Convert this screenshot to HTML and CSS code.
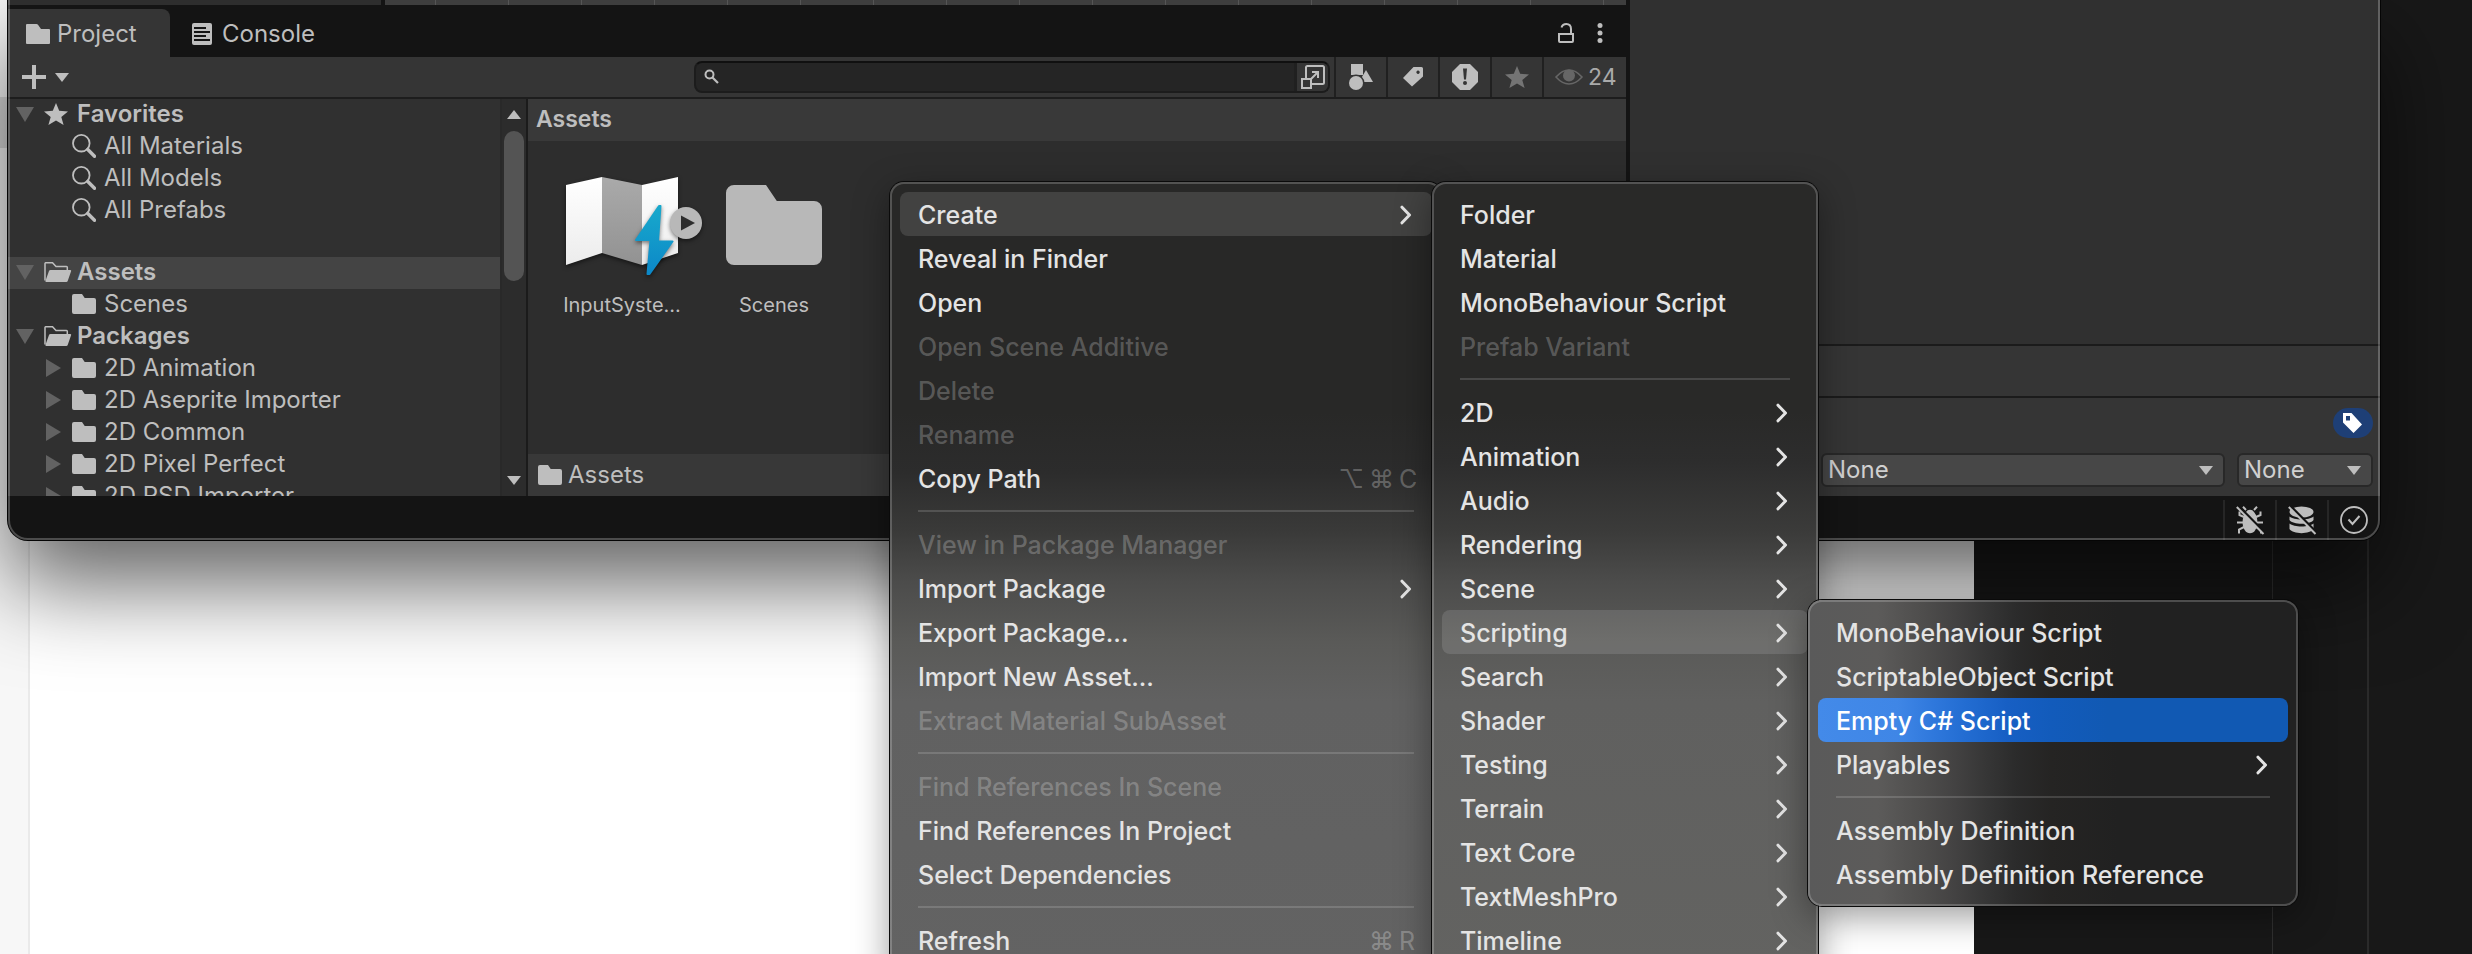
FILE: index.html
```html
<!DOCTYPE html>
<html lang="en">
<head>
<meta charset="utf-8">
<title>Project</title>
<link rel="stylesheet" href="styles.css">
</head>
<body>
<svg class="sprite" aria-hidden="true">
  <symbol id="folder" viewBox="0 0 24 20"><path d="M2 0H10L12.7 4H22a2 2 0 0 1 2 2V18a2 2 0 0 1-2 2H2a2 2 0 0 1-2-2V2a2 2 0 0 1 2-2z"/></symbol>
  <symbol id="folder-open" viewBox="0 0 28 20"><path d="M1 18.500V1.500a.8.8 0 0 1 .8-.8H8.500L12 4.500H22.500a.8.800 0 0 1 .8.8V8" fill="none" stroke="currentColor" stroke-width="1.500"/><path d="M6.500 8H26a1 1 0 0 1 1 1.400L23.700 19a1.500 1.500 0 0 1-1.400 1H2.500a1 1 0 0 1-1-1.300L5 9a1.600 1.600 0 0 1 1.500-1z"/></symbol>
  <symbol id="lens" viewBox="0 0 24 24"><circle cx="9.300" cy="9.200" r="8.300" fill="none" stroke="currentColor" stroke-width="1.800"/><path d="M15.800 15.500L22.500 22.300" stroke="currentColor" stroke-width="3.400" stroke-linecap="round"/></symbol>
  <symbol id="star" viewBox="0 0 24 22"><path d="M12 0L15.200 7.800L24 8.500L17.300 13.900L19.600 22L12 17.600L4.400 22L6.700 13.900L0 8.500L8.800 7.800z"/></symbol>
  <symbol id="tri-down" viewBox="0 0 18 18"><path d="M0 2H18L9 17z"/></symbol>
  <symbol id="tri-right" viewBox="0 0 18 18"><path d="M2 0V18L17 9z"/></symbol>
  <symbol id="caret" viewBox="0 0 14 9"><path d="M0 0H14L7 9z"/></symbol>
  <symbol id="caret-up" viewBox="0 0 14 9"><path d="M0 9H14L7 0z"/></symbol>
  <symbol id="chev" viewBox="0 0 14 20"><path d="M2 2.200L9.500 10L2 17.800" fill="none" stroke="currentColor" stroke-width="3" stroke-linecap="round" stroke-linejoin="round"/></symbol>
</svg>

<div class="desktop">
  <div class="backdrop" aria-hidden="true">
    <div class="rail"><div class="rail-mark"></div></div>
    <div class="page"></div>
    <div class="dark dark-a"></div>
    <div class="dark dark-b"></div>
    <div class="dark dark-c"></div>
  </div>

  <main class="window">
    <div class="split">
      <section class="dock">
        <div class="upper">
          <div class="upper-left"></div>
          <div class="upper-right"></div>
        </div>
        <div class="tabs">
          <button class="tab tab-on"><svg class="ic24x20" viewBox="0 0 24 20"><path d="M1 0H10.500a2 2 0 0 1 1.500.7L15 5H23a1 1 0 0 1 1 1V19a1 1 0 0 1-1 1H1a1 1 0 0 1-1-1V1a1 1 0 0 1 1-1z"/></svg>Project</button>
          <button class="tab"><svg class="ic20x22" viewBox="0 0 20 22"><rect width="20" height="22" rx="2"/><path d="M2 5H14M2 9H18M2 13H14M2 17H18" stroke="#141414" stroke-width="2"/></svg>Console</button>
          <span class="grow"></span>
          <button class="tab-tool" aria-label="Lock"><svg class="ic16x20" viewBox="0 0 16 20"><path d="M1 11H15V18a1 1 0 0 1-1 1H2a1 1 0 0 1-1-1z" fill="none" stroke="currentColor" stroke-width="2"/><path d="M3.500 4.500C4.300 2 6 1 8.300 1C11.500 1 13 3 13 6V10" fill="none" stroke="currentColor" stroke-width="2"/></svg></button>
          <button class="tab-tool" aria-label="More"><svg class="ic16x20" viewBox="0 0 16 20"><circle cx="8" cy="2.500" r="2.500"/><circle cx="8" cy="10" r="2.500"/><circle cx="8" cy="17.500" r="2.500"/></svg></button>
        </div>
        <div class="toolbar">
          <button class="add" aria-label="Add"><svg class="ic24" viewBox="0 0 24 24"><path d="M12 0V24M0 12H24" stroke="currentColor" stroke-width="4"/></svg><svg class="ic14x9"><use href="#caret"/></svg></button>
          <span class="grow"></span>
          <div class="search">
            <svg class="ic16" viewBox="0 0 16 16"><circle cx="5.500" cy="5.500" r="4" fill="none" stroke="currentColor" stroke-width="2"/><path d="M8.500 8.500L14 14" stroke="currentColor" stroke-width="2.200"/></svg>
            <input type="text" aria-label="Search">
            <button class="picker" aria-label="Open in search"><svg class="ic24" viewBox="0 0 24 24"><rect x="5" y="1" width="18" height="18" rx="1.500" fill="none" stroke="currentColor" stroke-width="2"/><rect x="1" y="14" width="9" height="9" fill="#353535" stroke="currentColor" stroke-width="2"/><path d="M9.500 14.500L17 7M11 7H17V13" fill="none" stroke="currentColor" stroke-width="2"/></svg></button>
          </div>
          <button class="tool" aria-label="Filter by type"><svg class="ic24x26" viewBox="0 0 24 26"><path d="M17 6L24 18H10z"/><path d="M2 0H14V11H2z"/><circle cx="7" cy="19" r="7" stroke="#353535" stroke-width="3" paint-order="stroke"/></svg></button>
          <button class="tool" aria-label="Filter by label"><svg class="ic20" viewBox="0 0 20 20"><path fill-rule="evenodd" d="M10.500 0H18.500a1.500 1.500 0 0 1 1.500 1.500V9.500L9 19.500L0 11zM15 3.500a1.700 1.700 0 1 0 .1 0z"/></svg></button>
          <button class="tool" aria-label="Errors"><svg class="ic26" viewBox="0 0 26 26"><path d="M8 0H18L26 8V18L18 26H8L0 18V8z"/><path d="M11 4.500H15L14 15.500H12z" fill="#353535"/><circle cx="13" cy="19" r="2" fill="#353535"/></svg></button>
          <button class="tool dim" aria-label="Favorite"><svg class="ic24x22"><use href="#star"/></svg></button>
          <button class="tool tool-wide"><svg class="ic28x16 eye" viewBox="0 0 28 16"><path d="M1 8C6 2.500 9 1 14 1S22 2.500 27 8C22 13.500 19 15 14 15S6 13.500 1 8z" fill="none" stroke="currentColor" stroke-width="1.600"/><circle cx="14" cy="6.500" r="6"/></svg>24</button>
        </div>
        <div class="dock-body">
          <div class="tree">
            <div class="row bold"><svg class="twist"><use href="#tri-down"/></svg><svg class="ic24x22"><use href="#star"/></svg>Favorites</div>
            <div class="row child"><svg class="twist"></svg><svg class="ic24"><use href="#lens"/></svg>All Materials</div>
            <div class="row child"><svg class="twist"></svg><svg class="ic24"><use href="#lens"/></svg>All Models</div>
            <div class="row child"><svg class="twist"></svg><svg class="ic24"><use href="#lens"/></svg>All Prefabs</div>
            <div class="tree-gap"></div>
            <div class="row bold on"><svg class="twist"><use href="#tri-down"/></svg><svg class="ic28x20"><use href="#folder-open"/></svg>Assets</div>
            <div class="row child"><svg class="twist"></svg><svg class="ic24x20"><use href="#folder"/></svg>Scenes</div>
            <div class="row bold"><svg class="twist"><use href="#tri-down"/></svg><svg class="ic28x20"><use href="#folder-open"/></svg>Packages</div>
            <div class="row child"><svg class="twist"><use href="#tri-right"/></svg><svg class="ic24x20"><use href="#folder"/></svg>2D Animation</div>
            <div class="row child"><svg class="twist"><use href="#tri-right"/></svg><svg class="ic24x20"><use href="#folder"/></svg>2D Aseprite Importer</div>
            <div class="row child"><svg class="twist"><use href="#tri-right"/></svg><svg class="ic24x20"><use href="#folder"/></svg>2D Common</div>
            <div class="row child"><svg class="twist"><use href="#tri-right"/></svg><svg class="ic24x20"><use href="#folder"/></svg>2D Pixel Perfect</div>
            <div class="row child"><svg class="twist"><use href="#tri-right"/></svg><svg class="ic24x20"><use href="#folder"/></svg>2D PSD Importer</div>
          </div>
          <div class="scroll" aria-hidden="true">
            <svg class="ic14x9"><use href="#caret-up"/></svg>
            <div class="thumb"></div>
            <svg class="ic14x9"><use href="#caret"/></svg>
          </div>
          <div class="content">
            <div class="crumb">Assets</div>
            <div class="grid">
              <figure class="asset">
                <svg class="ic128" viewBox="0 0 128 128">
                  <defs>
                    <linearGradient id="pw" x1="0" y1="0" x2="0" y2="1"><stop offset="0" stop-color="#fff"/><stop offset="1" stop-color="#ececec"/></linearGradient>
                    <linearGradient id="pg" x1="0" y1="0" x2="0" y2="1"><stop offset="0" stop-color="#aaa"/><stop offset="1" stop-color="#929292"/></linearGradient>
                    <linearGradient id="pb" x1="0" y1="0" x2="0" y2="1"><stop offset="0" stop-color="#18a9cc"/><stop offset="1" stop-color="#0c88c8"/></linearGradient>
                  </defs>
                  <g class="soft">
                    <path d="M8 24L44 16V92L8 104z" fill="url(#pw)"/>
                    <path d="M44 16L84 24V104L44 92z" fill="url(#pg)"/>
                    <path d="M84 24L120 16V92L84 104z" fill="url(#pw)"/>
                  </g>
                  <path class="soft" d="M101 45L78 79H92.500L89.500 113H91.500L114.500 80.500H100L102.500 45z" fill="url(#pb)" stroke="url(#pb)" stroke-width="2" stroke-linejoin="round"/>
                  <circle class="soft" cx="128" cy="62" r="16" fill="#b8b8b8"/>
                  <path d="M123 54.500V69.500L137 62z" fill="#2d2d2d"/>
                </svg>
                <figcaption>InputSyste...</figcaption>
              </figure>
              <figure class="asset">
                <svg class="ic128" viewBox="-4 -6 32 32"><path d="M2 0H10L12.700 4H22a2 2 0 0 1 2 2V18a2 2 0 0 1-2 2H2a2 2 0 0 1-2-2V2a2 2 0 0 1 2-2z"/></svg>
                <figcaption>Scenes</figcaption>
              </figure>
            </div>
            <div class="path"><svg class="ic24x20"><use href="#folder"/></svg>Assets</div>
          </div>
        </div>
      </section>
      <aside class="inspector">
        <div class="insp-body"></div>
        <div class="insp-bar"></div>
        <div class="insp-foot">
          <button class="badge" aria-label="Labels"><svg class="ic20" viewBox="0 0 20 20"><path fill-rule="evenodd" d="M0 0H8.500L19 11.500L10.500 20L0 9.500zM3 3V7.500H7V3z"/></svg></button>
          <div class="bundles">
            <span class="drop drop-main"><select aria-label="Asset bundle"><option>None</option></select><svg class="ic14x9"><use href="#caret"/></svg></span>
            <span class="drop drop-side"><select aria-label="Asset bundle variant"><option>None</option></select><svg class="ic14x9"><use href="#caret"/></svg></span>
          </div>
        </div>
      </aside>
    </div>
    <footer class="status">
      <button aria-label="Debugger off"><svg class="ic28" viewBox="0 0 28 28"><path d="M10 6a4.500 4 0 0 1 8 0L20 9C22 14 22 20 19 24.500C17 28 11 28 9 24.500C6 20 6 14 8 9z"/><path d="M10 4L7 .8M18 4L21 .8M8 11L3.500 9V5.500M20 11L24.500 9V5.500M7 16.500H1M21 16.500H27M8 21L3 23.500V27.500M20 21L25 23.500V27.500" fill="none" stroke="currentColor" stroke-width="2"/><path d="M2.500 0L28 26" stroke="#141414" stroke-width="2.500"/><path d="M.8 1L27.500 28" stroke="currentColor" stroke-width="2"/></svg></button>
      <button aria-label="Cache server off"><svg class="ic28" viewBox="0 0 28 28"><ellipse cx="13.500" cy="6" rx="12" ry="5.500"/><path d="M1.500 10.500C6 14.500 21 14.500 25.500 10.500V14C22 19 5 19 1.500 14zM1.500 17.500C6 21.500 21 21.500 25.500 17.500V23C22 28.500 5 28.500 1.500 23z"/><path d="M2.500 0L28 26" stroke="#141414" stroke-width="2.500"/><path d="M.8 1L27.500 28" stroke="currentColor" stroke-width="2"/></svg></button>
      <button aria-label="Tasks"><svg class="ic28" viewBox="0 0 28 28"><circle cx="14" cy="14" r="13" fill="none" stroke="currentColor" stroke-width="1.800"/><path d="M8.500 13.500L12.500 18L19.500 10" fill="none" stroke="currentColor" stroke-width="2"/></svg></button>
    </footer>
  </main>

  <div class="menu menu-root" role="menu">
    <button role="menuitem" class="open">Create<svg class="chev"><use href="#chev"/></svg></button>
    <button role="menuitem">Reveal in Finder</button>
    <button role="menuitem">Open</button>
    <button role="menuitem" disabled>Open Scene Additive</button>
    <button role="menuitem" disabled>Delete</button>
    <button role="menuitem" disabled>Rename</button>
    <button role="menuitem">Copy Path<span class="keys"><span>⌥</span><span>⌘</span><span class="key">C</span></span></button>
    <hr>
    <button role="menuitem" disabled>View in Package Manager</button>
    <button role="menuitem">Import Package<svg class="chev"><use href="#chev"/></svg></button>
    <button role="menuitem">Export Package...</button>
    <button role="menuitem">Import New Asset...</button>
    <button role="menuitem" disabled>Extract Material SubAsset</button>
    <hr>
    <button role="menuitem" disabled>Find References In Scene</button>
    <button role="menuitem">Find References In Project</button>
    <button role="menuitem">Select Dependencies</button>
    <hr>
    <button role="menuitem">Refresh<span class="keys"><span>⌘</span><span class="key">R</span></span></button>
  </div>

  <div class="menu menu-create" role="menu">
    <button role="menuitem">Folder</button>
    <button role="menuitem">Material</button>
    <button role="menuitem">MonoBehaviour Script</button>
    <button role="menuitem" disabled>Prefab Variant</button>
    <hr>
    <button role="menuitem">2D<svg class="chev"><use href="#chev"/></svg></button>
    <button role="menuitem">Animation<svg class="chev"><use href="#chev"/></svg></button>
    <button role="menuitem">Audio<svg class="chev"><use href="#chev"/></svg></button>
    <button role="menuitem">Rendering<svg class="chev"><use href="#chev"/></svg></button>
    <button role="menuitem">Scene<svg class="chev"><use href="#chev"/></svg></button>
    <button role="menuitem" class="open">Scripting<svg class="chev"><use href="#chev"/></svg></button>
    <button role="menuitem">Search<svg class="chev"><use href="#chev"/></svg></button>
    <button role="menuitem">Shader<svg class="chev"><use href="#chev"/></svg></button>
    <button role="menuitem">Testing<svg class="chev"><use href="#chev"/></svg></button>
    <button role="menuitem">Terrain<svg class="chev"><use href="#chev"/></svg></button>
    <button role="menuitem">Text Core<svg class="chev"><use href="#chev"/></svg></button>
    <button role="menuitem">TextMeshPro<svg class="chev"><use href="#chev"/></svg></button>
    <button role="menuitem">Timeline<svg class="chev"><use href="#chev"/></svg></button>
  </div>

  <div class="menu menu-script" role="menu">
    <button role="menuitem">MonoBehaviour Script</button>
    <button role="menuitem">ScriptableObject Script</button>
    <button role="menuitem" class="picked">Empty C# Script</button>
    <button role="menuitem">Playables<svg class="chev"><use href="#chev"/></svg></button>
    <hr>
    <button role="menuitem">Assembly Definition</button>
    <button role="menuitem">Assembly Definition Reference</button>
  </div>
</div>
</body>
</html>
```
FILE: styles.css
```css
* { box-sizing: border-box; }
body { margin: 0; overflow: hidden; background: #181818; color: #bebebe; font: 24px/32px Inter, "Liberation Sans", sans-serif; font-optical-sizing: none; }
button, input, select { margin: 0; padding: 0; border: 0; background: none; color: inherit; font: inherit; font-optical-sizing: none; }
svg { display: block; flex: none; overflow: visible; fill: currentColor; }
.sprite { position: absolute; width: 0; height: 0; }
.grow { flex: 1; }

.ic14x9 { width: 14px; height: 9px; }
.ic16 { width: 16px; height: 16px; }
.ic16x20 { width: 16px; height: 20px; }
.ic20 { width: 20px; height: 20px; }
.ic20x22 { width: 20px; height: 22px; }
.ic24 { width: 24px; height: 24px; }
.ic24x20 { width: 24px; height: 20px; }
.ic24x22 { width: 24px; height: 22px; }
.ic24x26 { width: 24px; height: 26px; }
.ic26 { width: 26px; height: 26px; }
.ic28 { width: 28px; height: 28px; }
.ic28x16 { width: 28px; height: 16px; }
.ic28x20 { width: 28px; height: 20px; }
.ic128 { width: 128px; height: 128px; color: #b8b8b8; }

/* Desktop behind the editor window */
.desktop { position: relative; display: grid; height: 100vh; overflow: hidden; }
.backdrop, .window { grid-area: 1 / 1; }
.backdrop { display: grid; grid-template-columns: 30px minmax(0, 1fr) 298px 95px 105px; }
.rail { padding-top: 97px; background: #f7f7f7; border-right: 2px solid #eaeaea; }
.rail-mark { height: 51px; background: #dadada; }
.page { background: #fff; }
.dark { background: #181818; }
.dark-b { border-left: 1px solid #303030; }
.dark-c { border-left: 2px solid #2a2a2a; }

/* Editor window */
.window { position: relative; align-self: start; margin: 0 92px 0 8px; overflow: visible; border-radius: 0 0 20px 20px; background: #141414; box-shadow: 0 0 0 1px #050505, 0 44px 90px rgba(0, 0, 0, .62); }
.window::after { content: ""; position: absolute; inset: -4px 0 0; border: 2px solid rgba(255, 255, 255, .24); border-radius: 0 0 20px 20px; pointer-events: none; }
.split { display: grid; grid-template-columns: minmax(0, 1fr) 750px; }
.dock { min-width: 0; border-right: 4px solid #141414; }

.upper { display: flex; height: 5px; }
.upper-left { width: 373px; background: #2e2e2e; }
.upper-right { flex: 1; margin-left: 4px; background: repeating-linear-gradient(90deg, transparent 0 50px, #555 50px 51px, transparent 51px 73px), #3e3e3e; }

.tabs { display: flex; align-items: center; height: 52px; padding-right: 9px; padding-top: 4px; background: #141414; }
.tab { display: flex; align-items: center; gap: 7px; height: 48px; padding: 1px 16px 0 18px; }
.tab + .tab { gap: 10px; padding-left: 22px; }
.tab-on { width: 162px; border-radius: 0 8px 0 0; background: #353535; }
.tab-tool { display: grid; place-items: center; width: 34px; height: 44px; }

.toolbar { display: flex; align-items: center; height: 42px; border-bottom: 2px solid #1d1d1d; background: #353535; }
.add { display: flex; align-items: center; gap: 9px; padding-left: 14px; }
.search { display: flex; align-items: center; width: 636px; height: 32px; margin-right: 4px; padding-left: 8px; border: 2px solid #1c1c1c; border-top-color: #101010; border-radius: 8px; background: #252525; overflow: hidden; }
.search input { flex: 1; min-width: 0; padding: 0 8px; outline: 0; }
.picker { display: grid; place-items: center; width: 34px; height: 28px; border-left: 3px solid #202020; background: #353535; }
.tool { display: grid; place-items: center; width: 52px; height: 40px; border-left: 2px solid #202020; }
.tool.dim { color: #747474; }
.tool-wide { display: flex; align-items: center; gap: 5px; width: 84px; padding-left: 11px; color: #aaa; font-size: 23px; }
.eye { color: #666; }

.dock-body { display: grid; grid-template-columns: 492px 28px minmax(0, 1fr); height: 397px; }
.tree { overflow: hidden; background: #303030; }
.row { display: flex; align-items: center; height: 32px; padding: 0 0 2px 8px; white-space: nowrap; }
.row.on { background: #444; }
.row.child { padding-left: 36px; }
.row.child svg + svg { margin-right: 8px; }
.bold { font-weight: 600; }
.bold svg + svg { margin-right: 5px; }
.bold .ic24x22 { margin-right: 9px; }
.twist { width: 18px; height: 18px; margin-right: 10px; color: #626262; }
.tree-gap { height: 30px; }
.scroll { display: flex; flex-direction: column; align-items: center; padding: 11px 0; border-left: 2px solid #292929; border-right: 2px solid #1b1b1b; background: #2c2c2c; }
.thumb { width: 20px; height: 150px; margin: 12px 0 auto; border-radius: 10px; background: #545454; }
.content { display: grid; grid-template-rows: 42px minmax(0, 1fr) 42px; background: #2d2d2d; }
.crumb { padding: 4px 8px; background: #393939; font-size: 23px; font-weight: 600; }
.grid { display: flex; gap: 24px; padding: 20px 30px; }
.asset { width: 128px; margin: 0; text-align: center; font-size: 20px; }
.soft { filter: drop-shadow(0 2px 2px rgba(0, 0, 0, .5)); }
.path { display: flex; align-items: center; gap: 6px; padding-left: 10px; background: #383838; }

.inspector { display: flex; flex-direction: column; background: #353535; }
.insp-body { flex: 1; border-bottom: 2px solid #1b1b1b; background: #303030; }
.insp-bar { height: 52px; border-bottom: 2px solid #1b1b1b; }
.insp-foot { height: 98px; padding: 10px 7px 0 191px; }
.badge { display: grid; place-items: center; width: 40px; height: 30px; margin: 0 0 15px auto; border-radius: 15px; background: #1e3f76; color: #fff; }
.bundles { display: flex; gap: 12px; }
.drop { display: grid; align-items: center; }
.drop select, .drop svg { grid-area: 1 / 1; }
.drop svg { justify-self: end; margin-right: 12px; pointer-events: none; }
.drop select { width: 100%; height: 34px; padding: 0 5px; appearance: none; border: 2px solid #282828; border-radius: 6px; background: #474747; color: #d0d0d0; line-height: 28px; }
.drop-main { flex: 1; }
.drop-side { width: 136px; }

.status { display: flex; justify-content: flex-end; height: 44px; padding: 4px 1px 0 0; }
.status button { display: grid; justify-items: center; align-content: start; width: 52px; padding-top: 6px; border-left: 2px solid #262626; }

/* Menus */
.menu { position: absolute; display: flex; flex-direction: column; padding: 8px; border: 2px solid rgba(255, 255, 255, .2); border-radius: 14px; color: #e4e4e4; font-size: 25px; font-weight: 500; box-shadow: 0 0 0 1px #0a0a0a, 0 10px 36px rgba(0, 0, 0, .4); background-origin: border-box; }
.menu button { display: flex; align-items: center; justify-content: space-between; height: 44px; padding: 2px 18px 0; border-radius: 8px; text-align: left; white-space: nowrap; }
.menu button:disabled { color: rgba(255, 255, 255, .23); }
.menu .open { background: rgba(255, 255, 255, .12); }
.menu hr { flex: none; width: auto; height: 2px; margin: 10px 18px; border: 0; background: rgba(255, 255, 255, .15); }
.chev { width: 14px; height: 20px; }
.keys { display: flex; gap: 5px; margin-right: -3px; color: rgba(255, 255, 255, .27); font-weight: 400; }
.key { width: 18px; }
.menu-root { left: 890px; top: 182px; width: 552px; height: 800px; background-image: linear-gradient(#282827 0, #282827 230px, #2c2c2c 290px, #3a3a39 350px, #4c4c4b 400px, #5a5a58 460px, #616161 520px, #636363 100%); }
.menu-create { left: 1432px; top: 182px; width: 386px; height: 800px; background-image: linear-gradient(#292928 0, #292928 230px, #2d2d2d 280px, #3b3b3a 350px, #4c4c4b 400px, #5a5a58 460px, #60605f 520px, #636361 100%); }
.menu-script { left: 1808px; top: 600px; width: 490px; background-image: linear-gradient(90deg, #5a5a5a 0, #5c5b5a 70px, #4f4e4d 112px, #434242 147px, #363636 178px, #2b2b2b 208px, #252423 243px, #212121 310px); }
.menu .picked { color: #fff; background: linear-gradient(90deg, #438ae9 0, #3f86e6 80px, #2f78dc 115px, #236dd2 146px, #175fc4 189px, #125bbb 233px, #1159b3 290px); }
```
